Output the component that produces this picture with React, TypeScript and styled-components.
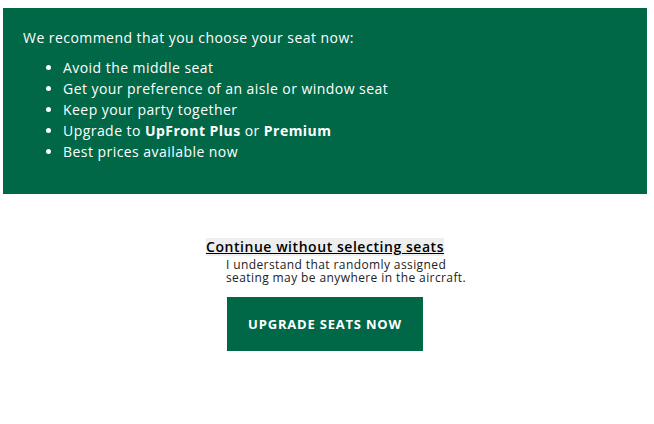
import React from 'react'
import styled, { createGlobalStyle } from 'styled-components'

const GlobalStyle = createGlobalStyle`
    body {
        margin: 0;
        background: #ffffff;
        font-family: "Open Sans", "Liberation Sans", sans-serif;
    }
`

const Page = styled.div`
    padding: 8px 7px 0 3px;
`

const Recommend = styled.section`
    background-color: #006747;
    color: #ffffff;
    padding: 21px 20px 32px 20px;
    font-size: 14px;
    letter-spacing: 0.45px;
`

const Intro = styled.p`
    margin: 0 0 11px 0;
    line-height: 17px;
`

const Benefits = styled.ul`
    margin: 0;
    padding-left: 40px;
    line-height: 21px;
`

const Strong = styled.strong`
    font-weight: 700;
`

const Choices = styled.div`
    display: flex;
    flex-direction: column;
    align-items: center;
    padding-top: 44px;
`

const SkipBlock = styled.div`
    display: flex;
    flex-direction: column;
    align-items: flex-start;
`

const SkipLink = styled.a`
    display: inline-block;
    background-color: #eeeeee;
    color: #000000;
    font-size: 14px;
    font-weight: 600;
    line-height: 18px;
    letter-spacing: 0.55px;
    text-decoration: underline;
    cursor: pointer;
`

/* the note hangs past the link's right edge, so it takes no width of its own */
const SkipNote = styled.p`
    width: 0;
    margin: 3px 0 0 20px;
    font-size: 12px;
    line-height: 12.5px;
    letter-spacing: 0.4px;
    color: #222222;
    white-space: nowrap;
`

const UpgradeButton = styled.button`
    margin-top: 13px;
    width: 196px;
    height: 54px;
    border: none;
    background-color: #006747;
    color: #ffffff;
    font-family: inherit;
    font-size: 13px;
    font-weight: 700;
    letter-spacing: 0.8px;
    text-transform: uppercase;
    cursor: pointer;
`

const App = () => {
    return (
        <Page>
            <GlobalStyle />
            <Recommend>
                <Intro>We recommend that you choose your seat now:</Intro>
                <Benefits>
                    <li>Avoid the middle seat</li>
                    <li>Get your preference of an aisle or window seat</li>
                    <li>Keep your party together</li>
                    <li>Upgrade to <Strong>UpFront Plus</Strong> or <Strong>Premium</Strong></li>
                    <li>Best prices available now</li>
                </Benefits>
            </Recommend>
            <Choices>
                <SkipBlock>
                    <SkipLink>Continue without selecting seats</SkipLink>
                    <SkipNote>
                        I understand that randomly assigned<br />
                        seating may be anywhere in the aircraft.
                    </SkipNote>
                </SkipBlock>
                <UpgradeButton>Upgrade seats now</UpgradeButton>
            </Choices>
        </Page>
    )
}

export default App
